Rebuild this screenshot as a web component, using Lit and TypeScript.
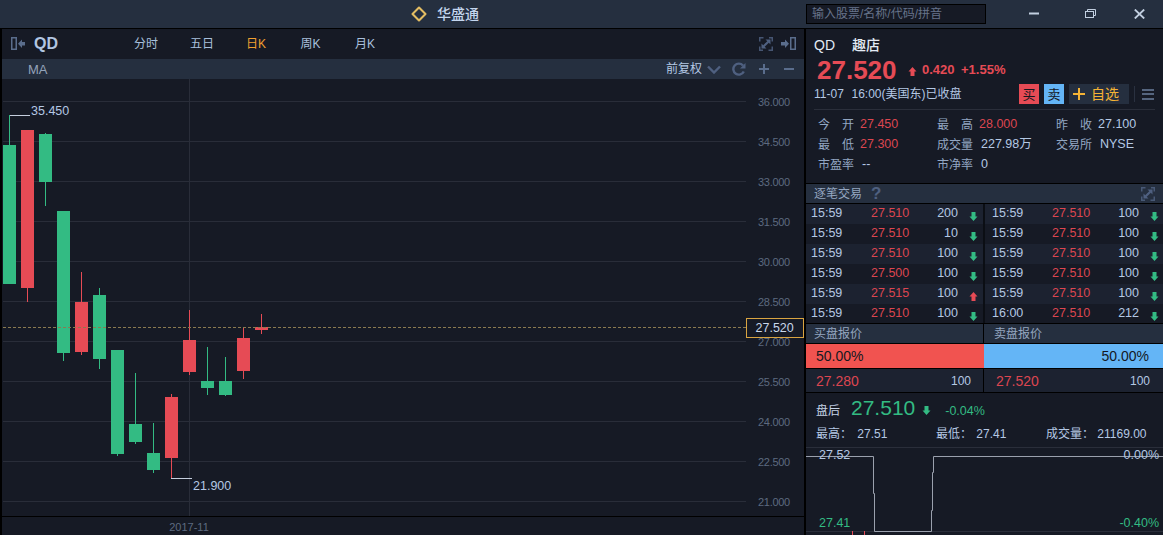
import { LitElement, html, css, svg } from "lit";
import { customElement } from "lit/decorators.js";

const G = "#33bb83";
const R = "#e64b55";
type C = [number, number, number, number, number, string];
// x centre, wick top, body top, body bottom, wick bottom, colour
const candles: C[] = [
  [9, 116, 145, 284, 284, G],
  [27, 130, 130, 288, 302, R],
  [45, 133, 134, 182, 206, G],
  [63, 211, 211, 353, 361, G],
  [81, 272, 302, 352, 355, R],
  [99, 288, 295, 359, 369, G],
  [117, 350, 350, 454, 456, G],
  [135, 373, 424, 442, 444, G],
  [153, 423, 453, 470, 473, G],
  [171, 394, 397, 458, 478, R],
  [189, 310, 340, 372, 375, R],
  [207, 347, 381, 388, 395, G],
  [225, 357, 381, 395, 396, G],
  [243, 328, 338, 371, 379, R],
  [261, 314, 327, 330, 334, R],
];
const axis = ["36.000", "34.500", "33.000", "31.500", "30.000", "28.500", "27.000", "25.500", "24.000", "22.500", "21.000"];

const left: [string, string, string, boolean][] = [
  ["15:59", "27.510", "200", false],
  ["15:59", "27.510", "10", false],
  ["15:59", "27.510", "100", false],
  ["15:59", "27.500", "100", false],
  ["15:59", "27.515", "100", true],
  ["15:59", "27.510", "100", false],
];
const right: [string, string, string, boolean][] = [
  ["15:59", "27.510", "100", false],
  ["15:59", "27.510", "100", false],
  ["15:59", "27.510", "100", false],
  ["15:59", "27.510", "100", false],
  ["15:59", "27.510", "100", false],
  ["16:00", "27.510", "212", false],
];

const arrow = (up: boolean, color: string) => html`<svg class="arrow" width="9" height="9" viewBox="0 0 9 9" fill=${color}>
  ${up
    ? svg`<polygon points="4.5,0 8.5,4.500 6.500,4.500 6.500,9 2.500,9 2.500,4.500 .5,4.500"/>`
    : svg`<polygon points="2.500,0 6.500,0 6.500,4.500 8.500,4.500 4.500,9 .5,4.500 2.500,4.500"/>`}
</svg>`;

const expand = html`<svg width="14" height="14" viewBox="0 0 14 14" fill="#4f6080">
  <path d="M0 0h4.500v1.500h-3v3H0zM14 14H9.500v-1.500h3v-3H14zM0 14V9.500h1.500v3H4V14zM14 0v4.500h-1.500v-3H10V0z" opacity=".85"/>
  <path d="M6.500 2.500h5v5L9.800 5.700 7.500 8 6 6.500l2.300-2.300zM7.500 11.500h-5v-5l1.700 1.700L6.500 6 8 7.500 5.700 9.800z"/>
</svg>`;

@customElement("app-root")
export class AppRoot extends LitElement {
  static styles = css`
    :host {
      display: block;
      width: 1163px;
      height: 535px;
      overflow: hidden;
      background: #000;
      color: #b4c8e4;
      font: 12px/1 "Liberation Sans", "Noto Sans CJK SC", sans-serif;
    }
    svg { display: block; }
    .titlebar {
      height: 28px;
      margin-bottom: 1px;
      background: #252f3f;
      display: flex;
      align-items: center;
      padding-left: 411px;
    }
    .brand { display: flex; align-items: center; gap: 10px; font-size: 14px; font-weight: 500; color: #c4d6ee; }
    .search {
      margin-left: auto;
      box-sizing: border-box;
      width: 180px;
      height: 20px;
      background: #161a25;
      border: 1px solid #000;
      padding-left: 5px;
      display: flex;
      align-items: center;
      color: #66738a;
      font-size: 12px;
    }
    .winctl { width: 177px; display: flex; align-items: center; padding-left: 43px; box-sizing: border-box; }
    .winctl svg:nth-child(2) { margin-left: 46px; }
    .winctl svg:nth-child(3) { margin-left: 38px; }
    .main { display: flex; height: 506px; padding-left: 2px; gap: 2px; }
    .chart { width: 802px; background: #161a25; display: flex; flex-direction: column; }
    .toolbar { height: 30px; display: flex; align-items: center; padding: 0 8px 0 9px; color: #a9c0dc; font-size: 12px; flex: none; }
    .sym { font-size: 16px; font-weight: 700; margin-left: 8px; width: 100px; color: #b2c6e2; }
    .tab { width: 56px; }
    .tab.k { width: 54.500px; }
    .tab.on { color: #f0a030; }
    .tool-right { margin-left: auto; display: flex; align-items: center; gap: 8px; }
    .subbar { height: 20px; background: #252f3f; display: flex; align-items: center; padding-left: 26px; font-size: 13px; color: #94a3ba; flex: none; }
    .adj { margin-left: auto; display: flex; align-items: center; color: #b4c8e4; padding-right: 9px; font-size: 12px; }
    .adj svg { flex: none; }
    .m5 { margin-left: 5px; }
    .m11 { margin-left: 11px; }
    .m12 { margin-left: 12px; }
    .m13 { margin-left: 13px; }
    .side { width: 357px; display: flex; flex-direction: column; gap: 1px; }
    .quote { height: 154px; background: #161a25; padding: 0 8px; box-sizing: border-box; flex: none; }
    .name { height: 28px; display: flex; align-items: center; padding-top: 4px; box-sizing: border-box; font-size: 14px; color: #e3ebf5; }
    .name b { font-size: 14px; margin-left: 17px; font-weight: 500; }
    .pricerow { height: 25px; display: flex; align-items: center; padding-left: 3px; color: #e64b55; }
    .bigprice { font-size: 26px; font-weight: 700; width: 91px; }
    .pricerow .arrow { margin: 0; transform: translateY(2px); }
    .chg { font-weight: 700; font-size: 13px; margin-left: 5px; width: 39px; }
    .pct { font-weight: 700; font-size: 13px; }
    .meta { height: 24px; display: flex; align-items: center; font-size: 12px; color: #b4c8e4; word-spacing: .5px; }
    .btn { width: 20px; height: 20px; display: flex; align-items: center; justify-content: center; font-size: 13px; color: #14181f; margin-right: 5px; }
    .btn.buy { background: #e64b55; margin-left: auto; }
    .btn.sell { background: #64b5f6; }
    .fav { width: 60px; height: 20px; background: #252f3f; color: #f5b335; display: flex; align-items: center; gap: 6px; padding-left: 4px; box-sizing: border-box; font-size: 14px; }
    .vline { width: 1px; height: 16px; background: #2a3140; margin: 0 7px 0 5px; }
    .ham { width: 12px; height: 11px; border-top: 2px solid #55657f; border-bottom: 2px solid #55657f; position: relative; box-sizing: border-box; margin-right: 1px; }
    .ham::after { content: ""; position: absolute; left: 0; right: 0; top: 2.500px; height: 2px; background: #55657f; }
    .rule { height: 1px; background: #2a2e3a; margin-top: 3px; margin-bottom: 5px; }
    .stats { display: grid; grid-template-columns: 119px 119px 1fr; grid-auto-rows: 20px; padding-left: 4px; align-items: center; font-size: 12.500px; }
    .stat { display: flex; align-items: center; }
    .stat span:last-child { padding-bottom: 1px; }
    .lbl { width: 36px; font-size: 12px; text-align-last: justify; color: #93a7c3; margin-right: 6px; white-space: nowrap; }
    .lbl.w { margin-right: 8px; }
    .red { color: #dc4650; }
    .sechead { height: 19px; background: #252f3f; display: flex; align-items: center; padding: 0 8px; color: #94a6c0; font-size: 12px; flex: none; }
    .q { font-size: 17px; font-weight: 700; color: #4f6080; margin-left: 9px; }
    .sechead svg { margin-left: auto; }
    .trades { display: grid; grid-template-columns: 177px 178px; column-gap: 2px; background: #0b0e14; flex: none; height: 119px; }
    .tcol { display: flex; flex-direction: column; }
    .tcol + .tcol .trow { padding-left: 7px; padding-right: 3px; }
    .trow { height: 20px; display: flex; align-items: center; padding: 0 4px 1px 5px; box-sizing: border-box; font-size: 12.500px; background: #161a25; }
    .trow:nth-child(odd) { background: #1c2230; }
    .trow:last-child { height: 19px; }
    .ttime { width: 60px; }
    .tprice { width: 40px; color: #dc4650; }
    .tqty { flex: 1; text-align: right; }
    .arrow { margin-left: 11px; margin-right: 1px; flex: none; transform: translateY(3px); }
    .two { display: grid; grid-template-columns: 177px 179px; column-gap: 1px; flex: none; }
    .bookhead { height: 19px; background: #252f3f; display: flex; align-items: center; padding-left: 8px; color: #94a6c0; font-size: 12px; }
    .bookhead + .bookhead { padding-left: 10px; }
    .bars { display: flex; height: 24px; font-size: 14px; color: #14181f; flex: none; }
    .bar { display: flex; align-items: center; }
    .bar.b { width: 178px; background: #f15350; padding-left: 10px; box-sizing: border-box; }
    .bar.a { width: 179px; background: #64b5f6; justify-content: flex-end; padding-right: 14px; box-sizing: border-box; }
    .level { height: 23px; background: #1c2230; display: flex; align-items: center; justify-content: space-between; padding: 0 12px 0 10px; font-size: 14px; color: #dc4650; }
    .level span { font-size: 12px; color: #b4c8e4; }
    .level + .level { padding-left: 12px; padding-right: 13px; }
    .after { flex: 1; background: #161a25; display: flex; flex-direction: column; min-height: 0; }
    .ahead { height: 32px; padding: 4px 10px 0; display: flex; align-items: baseline; color: #33bb83; flex: none; box-sizing: border-box; }
    .ahead i { font-style: normal; color: #c5d3e6; font-size: 12px; margin-right: 11px; }
    .ahead b { font-weight: 400; font-size: 21px; margin-right: 7px; }
    .ahead .arrow { margin: 0 2px 0 0; transform: none; }
    .ahead em { font-style: normal; font-size: 12.500px; margin-left: 12px; }
    .astats { height: 22px; display: flex; align-items: center; padding: 0 0 4px 10px; box-sizing: border-box; font-size: 12px; flex: none; }
    .astats span:nth-child(1) { width: 120px; word-spacing: 2px; }
    .astats span:nth-child(2) { width: 110px; word-spacing: 1px; }
    .mini { flex: none; }
    .t-axis { fill: #5d6a80; font-size: 11px; letter-spacing: -.3px; }
    .t-lab { fill: #b4c8e4; font-size: 12.500px; }
    .t-date { fill: #5d6a80; font-size: 11px; text-anchor: middle; }
    .t-box { fill: #c8d6ea; font-size: 12.500px; }
    .t-mini { fill: #b4c8e4; font-size: 12.500px; }
    .t-green { fill: #33bb83; font-size: 12.500px; }
    .end { text-anchor: end; }
  `;

  private tradeRows(rows: [string, string, string, boolean][]) {
    return rows.map(
      (r) => html`<div class="trow">
        <span class="ttime">${r[0]}</span><span class="tprice">${r[1]}</span><span class="tqty">${r[2]}</span>
        ${arrow(r[3], r[3] ? R : G)}
      </div>`
    );
  }

  private plot() {
    const grid = [101, 141, 181, 221, 261, 301, 341, 381, 421, 461, 501];
    return html`<svg width="802" height="456" viewBox="2 79 802 456">
      ${grid.map((y) => svg`<rect x="3" y=${y} width="743" height="1" fill="#292d39"/>`)}
      <rect x="189" y="79" width="1" height="437" fill="#292d39"/>
      ${candles.map(
        ([x, wt, bt, bb, wb, c]) => svg`
          <rect x=${x} y=${wt} width="1" height=${wb - wt} fill=${c}/>
          <rect x=${x - 6} y=${bt} width="13" height=${bb - bt} fill=${c}/>`
      )}
      <line x1="3" x2="746" y1="327.5" y2="327.5" stroke="#8a7a50" stroke-dasharray="3 2"/>
      <rect x="9" y="115" width="21" height="1" fill="#c5cede"/>
      <rect x="9" y="115" width="1" height="30" fill=${G}/>
      <rect x="171" y="478" width="21" height="1" fill="#c5cede"/>
      <text class="t-lab" x="31" y="115">35.450</text>
      <text class="t-lab" x="193" y="490">21.900</text>
      ${axis.map((t, i) => svg`<text class="t-axis" x="758" y=${106 + i * 40}>${t}</text>`)}
      <rect x="746.5" y="318.5" width="57" height="19" fill="#161a25" stroke="#d9a441"/>
      <text class="t-box" x="755.5" y="332">27.520</text>
      <rect x="2" y="516" width="802" height="1" fill="#000"/>
      <text class="t-date" x="189" y="531">2017-11</text>
    </svg>`;
  }

  private mini() {
    return html`<svg class="mini" width="357" height="89" viewBox="806 446 357 89">
      <rect x="806" y="446" width="357" height="1" fill="#2a2e3a"/>
      <rect x="806" y="530" width="357" height="1" fill="#2a2e3a"/>
      <path d="M806 455.5H873.5V492.5H874.5V530.5H931.5V509.5H932.5V471.5H933.5V455.5H1163" fill="none" stroke="#9aa0ad"/>
      <text class="t-mini" x="819" y="458">27.52</text>
      <text class="t-mini end" x="1159" y="458">0.00%</text>
      <text class="t-green" x="819" y="526">27.41</text>
      <text class="t-green end" x="1159" y="526">-0.40%</text>
      <rect x="852" y="530" width="1" height="5" fill=${R}/>
      <rect x="864" y="530" width="1" height="5" fill=${R}/>
    </svg>`;
  }

  render() {
    return html`
      <div class="titlebar">
        <div class="brand">
          <svg width="16" height="16" viewBox="0 0 16 16" fill="none" stroke="#e3bd63" stroke-width="2.100" stroke-linejoin="round">
            <path d="M8 1.500 14.500 8 8 14.500 1.500 8z"/>
          </svg>
          <span>华盛通</span>
        </div>
        <div class="search">输入股票/名称/代码/拼音</div>
        <div class="winctl">
          <svg width="10" height="10" viewBox="0 0 10 10"><rect y="3.500" width="10" height="2" fill="#c2cfe0"/></svg>
          <svg width="11" height="10" viewBox="0 0 11 10" fill="none" stroke="#c2cfe0"><rect x=".5" y="2.500" width="8" height="6"/><path d="M2.500 2.500V.5h8v6H8.500"/></svg>
          <svg width="11" height="10" viewBox="0 0 11 10" stroke="#c2cfe0" stroke-width="1.800"><path d="M.8 .5 10.200 9.500M10.200 .5 .8 9.500"/></svg>
        </div>
      </div>
      <div class="main">
        <section class="chart">
          <div class="toolbar">
            <svg width="15" height="14" viewBox="0 0 15 14" fill="#5a6d8c"><path d="M0 0h6v13H0zM1.500 1.500v10h3v-10z" fill-rule="evenodd"/><path d="M14 5v3.500h-3V11L7 6.750 11 2.500V5z"/></svg>
            <span class="sym">QD</span>
            <span class="tab">分时</span><span class="tab">五日</span><span class="tab on k">日K</span><span class="tab k">周K</span><span class="tab k">月K</span>
            <span class="tool-right">
              ${expand}
              <svg width="15" height="14" viewBox="0 0 15 14" fill="#5a6d8c"><path d="M9 0h6v13H9zM10.500 1.500v10h3v-10z" fill-rule="evenodd"/><path d="M0 5h4V2.500L8 6.750 4 11V8.500H0z"/></svg>
            </span>
          </div>
          <div class="subbar">
            MA
            <span class="adj">
              前复权
              <svg class="m5" width="14" height="9" viewBox="0 0 14 9" fill="none" stroke="#4f6080" stroke-width="2.400"><path d="M1 1.500 7 7.500 13 1.500"/></svg>
              <svg class="m11" width="14" height="14" viewBox="0 0 14 14" fill="none" stroke="#4f6080" stroke-width="2.400"><path d="M11.800 9.500A5.500 5.500 0 1 1 11 3.500"/><path d="M13.500 1v5.500h-5.500z" fill="#4f6080" stroke="none"/></svg>
              <svg class="m12" width="12" height="12" viewBox="0 0 12 12" fill="#5a6d8c"><path d="M5 1h2v4h4v2H7v4H5V7H1V5h4z"/></svg>
              <svg class="m13" width="12" height="12" viewBox="0 0 12 12" fill="#5a6d8c"><rect x="1" y="5" width="10" height="2"/></svg>
            </span>
          </div>
          ${this.plot()}
        </section>
        <aside class="side">
          <div class="quote">
            <div class="name">QD<b>趣店</b></div>
            <div class="pricerow">
              <span class="bigprice">27.520</span>
              ${arrow(true, R)}
              <span class="chg">0.420</span><span class="pct">+1.55%</span>
            </div>
            <div class="meta">
              <span>11-07&nbsp; 16:00(美国东)已收盘</span>
              <span class="btn buy">买</span><span class="btn sell">卖</span>
              <span class="fav"><svg width="12" height="12" viewBox="0 0 12 12" fill="#f5b335"><path d="M5 0h2v5h5v2H7v5H5V7H0V5h5z"/></svg>自选</span>
              <span class="vline"></span><span class="ham"></span>
            </div>
            <div class="rule"></div>
            <div class="stats">
              <div class="stat"><span class="lbl">今开</span><span class="red">27.450</span></div>
              <div class="stat"><span class="lbl">最高</span><span class="red">28.000</span></div>
              <div class="stat"><span class="lbl">昨收</span><span>27.100</span></div>
              <div class="stat"><span class="lbl">最低</span><span class="red">27.300</span></div>
              <div class="stat"><span class="lbl w">成交量</span><span>227.98万</span></div>
              <div class="stat"><span class="lbl w">交易所</span><span>NYSE</span></div>
              <div class="stat"><span class="lbl w">市盈率</span><span>--</span></div>
              <div class="stat"><span class="lbl w">市净率</span><span>0</span></div>
            </div>
          </div>
          <div class="sechead">逐笔交易<span class="q">?</span>${expand}</div>
          <div class="trades">
            <div class="tcol">${this.tradeRows(left)}</div>
            <div class="tcol">${this.tradeRows(right)}</div>
          </div>
          <div class="two"><div class="bookhead">买盘报价</div><div class="bookhead">卖盘报价</div></div>
          <div class="bars"><div class="bar b">50.00%</div><div class="bar a">50.00%</div></div>
          <div class="two">
            <div class="level">27.280<span>100</span></div>
            <div class="level">27.520<span>100</span></div>
          </div>
          <div class="after">
            <div class="ahead"><i>盘后</i><b>27.510</b>${arrow(false, G)}<em>-0.04%</em></div>
            <div class="astats"><span>最高： 27.51</span><span>最低： 27.41</span><span>成交量： 21169.00</span></div>
            ${this.mini()}
          </div>
        </aside>
      </div>
    `;
  }
}
